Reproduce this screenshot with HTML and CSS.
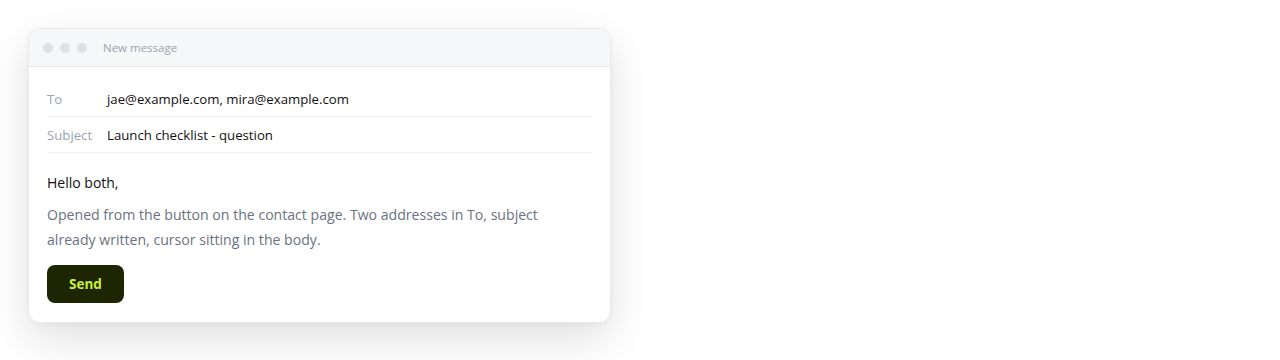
FILE: index.html
```html
<!DOCTYPE html>
<html lang="en">
<head>
<meta charset="utf-8">
<title>New message</title>
<link rel="stylesheet" href="styles.css">
</head>
<body>
<div class="stage">
  <div class="window">
    <div class="titlebar">
      <div class="dots"><span class="dot"></span><span class="dot"></span><span class="dot"></span></div>
      <span class="title">New message</span>
    </div>
    <div class="content">
      <div class="field">
        <span class="label">To</span>
        <span class="value">jae@example.com, mira@example.com</span>
      </div>
      <div class="field">
        <span class="label">Subject</span>
        <span class="value">Launch checklist - question</span>
      </div>
      <div class="body">
        <p class="greeting">Hello both,</p>
        <p class="text">Opened from the button on the contact page. Two addresses in To, subject already written, cursor sitting in the body.</p>
      </div>
      <button class="send">Send</button>
    </div>
  </div>
</div>
</body>
</html>
```
FILE: styles.css
```css
* { box-sizing: border-box; }
html, body { margin: 0; padding: 0; background: #ffffff; }
body { font-family: "Open Sans", "Noto Sans", sans-serif; color: #111; min-height: 360px; }
.stage { padding: 28px 0 0 28px; }
.window {
  width: 583px;
  background: #fff;
  border: 1px solid #e9eaec;
  border-radius: 12px;
  overflow: hidden;
  box-shadow: 0 16px 44px rgba(0,0,0,0.12), 0 2px 6px rgba(0,0,0,0.04);
}
.titlebar {
  height: 38px;
  background: #f6f7f9;
  border-bottom: 1px solid #e5e7eb;
  display: flex;
  align-items: center;
  padding-left: 14px;
  gap: 16px;
}
.dots { display: flex; gap: 7px; }
.dot { width: 10px; height: 10px; border-radius: 50%; background: #e0e1e3; }
.title { font-size: 11.5px; color: #9ca3af; }
.content { padding: 14px 18px 19px; }
.field {
  display: flex;
  align-items: center;
  height: 36px;
  border-bottom: 1px solid #f0f1f3;
  font-size: 13.2px;
}
.label { width: 60px; color: #9ca3af; }
.value { color: #111; }
.body { padding-top: 17px; }
.greeting { margin: 0 0 7px; font-size: 14px; line-height: 25px; color: #111; }
.text { margin: 0; max-width: 520px; font-size: 14.1px; line-height: 25px; color: #6b7280; }
.send {
  margin-top: 13px;
  width: 77px;
  height: 38px;
  border: none;
  border-radius: 8px;
  background: #1e2503;
  color: #c8f03a;
  font-family: "Open Sans", sans-serif;
  font-weight: 700;
  font-size: 13.5px;
}
```
